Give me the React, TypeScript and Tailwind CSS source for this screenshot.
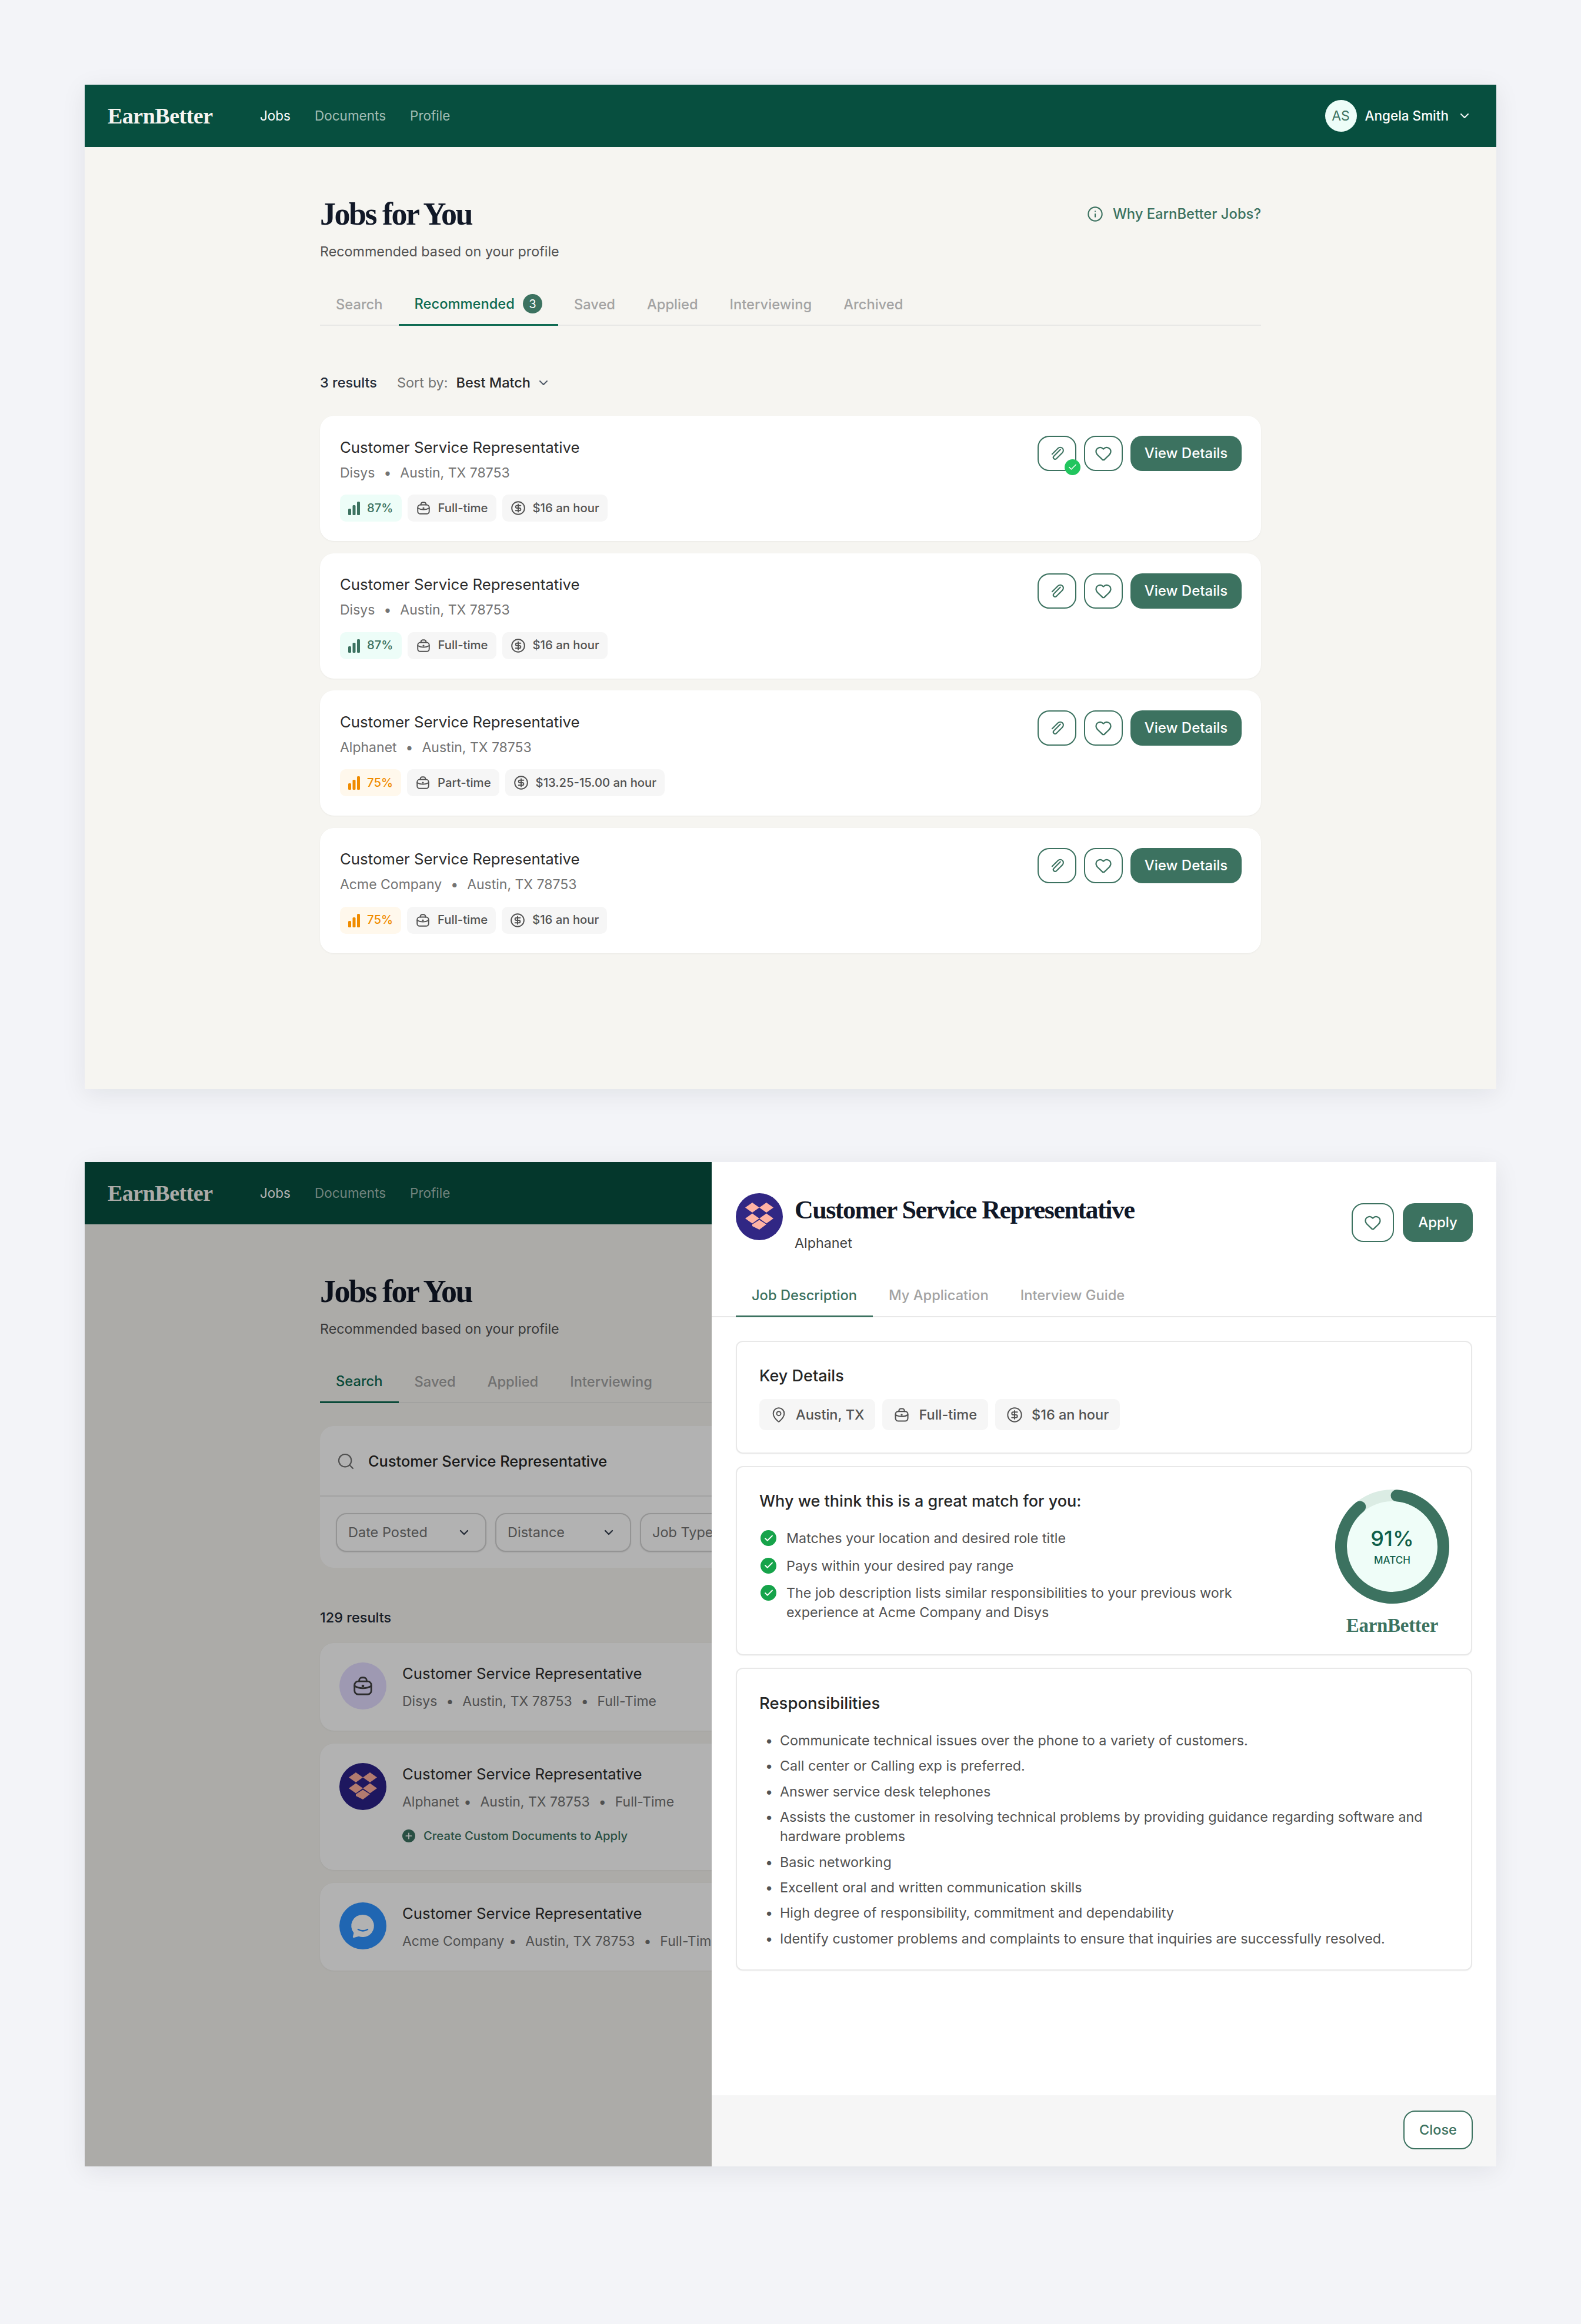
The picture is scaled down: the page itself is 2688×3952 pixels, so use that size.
import React from 'react'
import { Heart, Info, ChevronDown, Search, CircleDollarSign, MapPin, Check, Plus } from 'lucide-react'

const SERIF = "font-['Liberation_Serif',serif]"

const ClipIcon = () => (
  <svg width="28" height="28" viewBox="0 0 24 24" fill="none" stroke="currentColor" strokeWidth="1.8" strokeLinecap="round" strokeLinejoin="round">
    <path d="M17 6.500 7.500 16a2.600 2.600 0 0 0 3.700 3.700L20 11a4.500 4.500 0 0 0-6.400-6.400L5 13" />
  </svg>
)

const BagIcon = ({ size = 24 }: { size?: number }) => (
  <svg width={size} height={size} viewBox="0 0 24 24" fill="none" stroke="currentColor" strokeWidth="1.8" strokeLinecap="round" strokeLinejoin="round">
    <rect x="3" y="7" width="18" height="14" rx="4" />
    <path d="M8 7V6a3 3 0 0 1 3-3h2a3 3 0 0 1 3 3v1" />
    <path d="M3 12c2.5 1.6 5.5 2.4 9 2.4s6.5-.8 9-2.4" />
    <circle cx="12" cy="12" r=".6" fill="currentColor" />
  </svg>
)

const BarsIcon = ({ color }: { color: string }) => (
  <svg width="20" height="24" viewBox="0 0 20 24" fill={color}>
    <rect x="0" y="13" width="5" height="11" rx="1.5" />
    <rect x="7.5" y="7" width="5" height="17" rx="1.5" />
    <rect x="15" y="1" width="5" height="23" rx="1.5" />
  </svg>
)

const BoxLogo = ({ bg, fg, size = 80 }: { bg: string; fg: string; size?: number }) => (
  <svg width={size} height={size} viewBox="0 0 80 80" className="shrink-0">
    <circle cx="40" cy="40" r="40" fill={bg} />
    <g fill={fg}>
      <polygon points="16,24.5 28,16 40,24.5 28,33" />
      <polygon points="40,24.5 52,16 64,24.5 52,33" />
      <polygon points="16,43 28,34.5 40,43 28,51.5" />
      <polygon points="40,43 52,34.5 64,43 52,51.5" />
      <polygon points="28,53 40,45.5 52,53 40,62 28,56" />
    </g>
  </svg>
)

const ChatLogo = () => (
  <svg width="80" height="80" viewBox="0 0 80 80" className="shrink-0">
    <circle cx="40" cy="40" r="40" fill="#2f93ff" />
    <path d="M40 21a19 19 0 1 1-7 36.700L25 60c-1.500.400-2.500-.600-2-2l1.500-6A19 19 0 0 1 40 21z" fill="#fff" />
    <path d="M32 46c5 3 11 3 16 0" fill="none" stroke="#2f93ff" strokeWidth="2.600" strokeLinecap="round" />
  </svg>
)

const Chip = ({ icon, label, tone = 'plain' }: { icon: React.ReactNode; label: string; tone?: 'plain' | 'green' | 'orange' }) => {
  const toneClass =
    tone === 'green' ? 'bg-[#edfdf8] text-[#3c7260]' : tone === 'orange' ? 'bg-[#fff8ec] text-[#f08c00]' : 'bg-[#f6f6f6] text-[#525252]'
  return (
    <span className={`flex h-[46px] items-center gap-[12px] rounded-[10px] px-[14px] text-[20.3px] font-medium ${toneClass}`}>
      {icon}
      {label}
    </span>
  )
}

const DetailChip = ({ icon, label }: { icon: React.ReactNode; label: string }) => (
  <span className="flex h-[53px] items-center gap-[15px] rounded-[10px] bg-[#f6f6f6] px-[19px] text-[23.5px] font-medium text-[#525252]">
    {icon}
    {label}
  </span>
)

const IconButton = ({ children, className = '' }: { children: React.ReactNode; className?: string }) => (
  <button className={`relative flex h-[60px] w-[66px] items-center justify-center rounded-[20px] border-2 border-[#3c7260] bg-white text-[#3c7260] ${className}`}>
    {children}
  </button>
)

const JOBS = [
  { company: 'Disys', match: '87%', tone: 'green', type: 'Full-time', pay: '$16 an hour', done: true },
  { company: 'Disys', match: '87%', tone: 'green', type: 'Full-time', pay: '$16 an hour', done: false },
  { company: 'Alphanet', match: '75%', tone: 'orange', type: 'Part-time', pay: '$13.25-15.00 an hour', done: false },
  { company: 'Acme Company', match: '75%', tone: 'orange', type: 'Full-time', pay: '$16 an hour', done: false },
] as const

const Sep = ({ tight = false }: { tight?: boolean }) => (
  <span className={`text-[#737373] ${tight ? 'ml-[8px] mr-[15px]' : 'mx-[15px]'}`}>•</span>
)

const JobCard = ({ job }: { job: (typeof JOBS)[number] }) => (
  <div className="flex h-[213px] justify-between rounded-[24px] bg-white pb-0 pl-[34px] pr-[33px] shadow-[0_1px_3px_rgba(0,0,0,0.05)]">
    <div className="pt-[35px]">
      <div className="flex h-[38px] items-center text-[25.8px] text-[#2b2b2b]">Customer Service Representative</div>
      <div className="mt-[6px] flex h-[36px] items-center text-[23px] text-[#737373]">
        {job.company}
        <Sep />
        Austin, TX 78753
      </div>
      <div className="mt-[19px] flex gap-[10px]">
        <Chip
          tone={job.tone}
          icon={<BarsIcon color={job.tone === 'green' ? '#3c7260' : '#f08c00'} />}
          label={job.match}
        />
        <Chip icon={<BagIcon size={26} />} label={job.type} />
        <Chip icon={<CircleDollarSign size={26} strokeWidth={1.8} />} label={job.pay} />
      </div>
    </div>
    <div className="flex items-start gap-[13px] pt-[34px]">
      <IconButton>
        <ClipIcon />
        {job.done && (
          <span className="absolute -bottom-[9px] -right-[9px] flex h-[27px] w-[27px] items-center justify-center rounded-full bg-[#22c55e] text-white">
            <Check size={17} strokeWidth={2} />
          </span>
        )}
      </IconButton>
      <IconButton>
        <Heart size={30} strokeWidth={1.8} />
      </IconButton>
      <button className="h-[60px] w-[189px] rounded-[20px] bg-[#3c7260] text-[24px] font-medium text-white">View Details</button>
    </div>
  </div>
)

const Nav = () => (
  <div className="flex h-[106px] items-center justify-between bg-[#074f3f] pl-[39px] pr-[42px]">
    <div className="flex items-center">
      <span className={`${SERIF} w-[178px] text-[38px] font-bold tracking-[-0.5px] text-[#f6f5f1]`}>EarnBetter</span>
      <div className="ml-[81px] flex gap-[41px] text-[22.5px]">
        <span className="text-white">Jobs</span>
        <span className="text-[#a3bdb5]">Documents</span>
        <span className="text-[#a3bdb5]">Profile</span>
      </div>
    </div>
    <div className="flex items-center">
      <span className="flex h-[54px] w-[54px] items-center justify-center rounded-full bg-[#edfdf8] text-[23px] text-[#3c7260]">AS</span>
      <span className="ml-[14px] text-[22.5px] font-medium text-white">Angela Smith</span>
      <ChevronDown size={24} strokeWidth={2} className="ml-[15px] text-white" />
    </div>
  </div>
)

const Tabs = ({ items, active }: { items: string[]; active: string }) => (
  <div className="mt-[36px] flex h-[72px] border-b-2 border-[#e8e8e6]">
    {items.map((t) => (
      <div
        key={t}
        className={`-mb-[2px] flex items-center gap-[14px] px-[27px] text-[23.7px] font-medium ${t === active ? 'border-b-[3px] border-[#0f6b52] text-[#0f6b52]' : 'text-[#a3a3a3]'}`}
      >
        {t}
        {t === 'Recommended' && (
          <span className="flex h-[33px] w-[33px] items-center justify-center rounded-full bg-[#3c7260] text-[20px] font-normal text-white">3</span>
        )}
      </div>
    ))}
  </div>
)

const Heading = () => (
  <>
    <div className={`${SERIF} flex h-[64px] items-center text-[54px] font-bold tracking-[-2.5px] text-[#111827]`}>Jobs for You</div>
    <div className="mt-[14px] flex h-[36px] items-center text-[23.3px] text-[#525252]">Recommended based on your profile</div>
  </>
)

const FirstFrame = () => (
  <div className="h-[1708px] w-[2400px] overflow-hidden bg-[#f6f5f1] shadow-[0_8px_40px_rgba(17,24,39,0.08)]">
    <Nav />
    <div className="ml-[400px] w-[1600px] pt-[82px]">
      <div className="relative">
        <Heading />
        <div className="absolute right-0 top-[14px] flex items-center gap-[16px] text-[23.8px] font-medium text-[#3c7260]">
          <Info size={28} strokeWidth={1.8} />
          Why EarnBetter Jobs?
        </div>
      </div>
      <Tabs items={['Search', 'Recommended', 'Saved', 'Applied', 'Interviewing', 'Archived']} active="Recommended" />
      <div className="mt-[79px] flex h-[36px] items-center text-[23.5px]">
        <span className="font-medium text-[#1f2937]">3 results</span>
        <span className="ml-[34px] text-[#737373]">Sort by:</span>
        <span className="ml-[14px] font-medium text-[#262626]">Best Match</span>
        <ChevronDown size={24} strokeWidth={2} className="ml-[10px] text-[#4b5563]" />
      </div>
      <div className="mt-[38px] flex flex-col gap-[20.5px]">
        {JOBS.map((job, i) => (
          <JobCard key={i} job={job} />
        ))}
      </div>
    </div>
  </div>
)

const Filter = ({ label, width }: { label: string; width: string }) => (
  <div className={`flex h-[66px] shrink-0 items-center justify-between rounded-[18px] border-2 border-[#d4d4d4] bg-white pl-[19px] pr-[24px] text-[23.5px] text-[#737373] shadow-[0_1px_2px_rgba(0,0,0,0.1)] ${width}`}>
    {label}
    <ChevronDown size={24} strokeWidth={2.4} className="text-[#374151]" />
  </div>
)

const ResultCard = ({ logo, company, cta, tight, height }: { logo: React.ReactNode; company: string; cta?: boolean; tight?: boolean; height: string }) => (
  <div className={`flex gap-[27px] rounded-[24px] bg-white pl-[33px] pt-[33px] shadow-[0_1px_3px_rgba(0,0,0,0.05)] ${height}`}>
    {logo}
    <div className="whitespace-nowrap">
      <div className="flex h-[38px] items-center text-[25.8px] text-[#2b2b2b]">Customer Service Representative</div>
      <div className="mt-[10px] flex h-[36px] items-center text-[23px] text-[#737373]">
        {company}
        <Sep tight={tight} />
        Austin, TX 78753
        <Sep />
        Full-Time
      </div>
      {cta && (
        <div className="mt-[24px] flex h-[32px] items-center gap-[14px] text-[20.3px] font-medium text-[#3c7260]">
          <span className="flex h-[22px] w-[22px] items-center justify-center rounded-full bg-[#3c7260] text-white">
            <Plus size={16} strokeWidth={2.6} />
          </span>
          Create Custom Documents to Apply
        </div>
      )}
    </div>
  </div>
)

const SecondPage = () => (
  <>
    <Nav />
    <div className="ml-[400px] w-[1600px] pt-[82px]">
      <Heading />
      <Tabs items={['Search', 'Saved', 'Applied', 'Interviewing']} active="Search" />
      <div className="mt-[39px] rounded-[24px] bg-white">
        <div className="flex h-[120px] items-center gap-[22px] border-b-2 border-[#e8e8e8] pl-[28px] pt-[2px] text-[25.4px] font-medium text-[#262626]">
          <Search size={32} strokeWidth={1.6} className="text-[#737373]" />
          Customer Service Representative
        </div>
        <div className="flex h-[121px] gap-[15px] pl-[27px] pt-[28px]">
          <Filter label="Date Posted" width="w-[256px]" />
          <Filter label="Distance" width="w-[231px]" />
          <Filter label="Job Type" width="w-[231px]" />
        </div>
      </div>
      <div className="mt-[67px] flex h-[36px] items-center text-[23.5px] font-medium text-[#1f2937]">129 results</div>
      <div className="mt-[25px] flex flex-col gap-[22px]">
        <ResultCard
          height="h-[149px]"
          company="Disys"
          logo={
            <span className="flex h-[80px] w-[80px] shrink-0 items-center justify-center rounded-full bg-[#e3dcff] text-[#404040]">
              <BagIcon size={38} />
            </span>
          }
        />
        <ResultCard height="h-[215px]" company="Alphanet" cta tight logo={<BoxLogo bg="#2b2289" fg="#ffb0a0" />} />
        <ResultCard height="h-[149px]" company="Acme Company" tight logo={<ChatLogo />} />
      </div>
    </div>
  </>
)

const PanelBox = ({ children, className = '' }: { children: React.ReactNode; className?: string }) => (
  <div className={`rounded-[12px] border-2 border-[#e8e8e8] bg-white shadow-[0_1px_2px_rgba(0,0,0,0.04)] ${className}`}>{children}</div>
)

const MATCH_ITEMS: React.ReactNode[] = [
  'Matches your location and desired role title',
  'Pays within your desired pay range',
  <>
    The job description lists similar responsibilities to your previous work
    <br />
    experience at Acme Company and Disys
  </>,
]

const RESPONSIBILITIES: React.ReactNode[] = [
  'Communicate technical issues over the phone to a variety of customers.',
  'Call center or Calling exp is preferred.',
  'Answer service desk telephones',
  <>
    Assists the customer in resolving technical problems by providing guidance regarding software and
    <br />
    hardware problems
  </>,
  'Basic networking',
  'Excellent oral and written communication skills',
  'High degree of responsibility, commitment and dependability',
  'Identify customer problems and complaints to ensure that inquiries are successfully resolved.',
]

const MatchRing = () => (
  <div className="relative h-[194px] w-[194px]">
    <svg width="194" height="194" viewBox="0 0 194 194">
      <circle cx="97" cy="97" r="87" fill="#effdf8" stroke="#dbece4" strokeWidth="20" />
      <circle
        cx="97"
        cy="97"
        r="87"
        fill="none"
        stroke="#3c7260"
        strokeWidth="20"
        strokeLinecap="round"
        pathLength={360}
        strokeDasharray="316 360"
        transform="rotate(-85 97 97)"
      />
    </svg>
    <div className="absolute inset-0 flex flex-col items-center justify-center pb-[2px] text-[#0f5f4a]">
      <span className="text-[36px] font-medium leading-[44px]">91%</span>
      <span className="mt-[4px] text-[17px] font-medium leading-[22px]">MATCH</span>
    </div>
  </div>
)

const Panel = () => (
  <div className="absolute inset-y-0 right-0 flex w-[1334px] flex-col bg-white">
    <div className="flex h-[192px] justify-between pl-[41px] pr-[40px] pt-[53px]">
      <div className="flex gap-[20px]">
        <BoxLogo bg="#312784" fg="#ffb3a4" />
        <div>
          <div className={`${SERIF} flex h-[58px] items-center text-[44px] font-bold tracking-[-1.5px] text-[#111827]`}>Customer Service Representative</div>
          <div className="mt-[10px] flex h-[34px] items-center text-[23.3px] text-[#404040]">Alphanet</div>
        </div>
      </div>
      <div className="flex items-start gap-[15px] pt-[17px]">
        <button className="flex h-[66px] w-[72px] items-center justify-center rounded-[20px] border-2 border-[#3c7260] text-[#3c7260]">
          <Heart size={30} strokeWidth={1.8} />
        </button>
        <button className="h-[66px] w-[119px] rounded-[20px] bg-[#3c7260] text-[24px] font-medium text-white">Apply</button>
      </div>
    </div>
    <div className="flex h-[72px] border-b-2 border-[#e8e8e8] pl-[41px]">
      <div className="-mb-[2px] flex items-center border-b-[3px] border-[#3c7260] px-[27px] text-[23.7px] font-medium text-[#3c7260]">Job Description</div>
      <div className="flex items-center px-[27px] text-[23.7px] font-medium text-[#a3a3a3]">My Application</div>
      <div className="flex items-center px-[27px] text-[23.7px] font-medium text-[#a3a3a3]">Interview Guide</div>
    </div>
    <div className="flex flex-1 flex-col gap-[21px] px-[41px] pt-[40px]">
      <PanelBox className="h-[192px] px-[38px] pt-[40px]">
        <div className="flex h-[36px] items-center text-[27px] font-medium text-[#262626]">Key Details</div>
        <div className="mt-[21px] flex gap-[12px]">
          <DetailChip icon={<MapPin size={28} strokeWidth={1.7} />} label="Austin, TX" />
          <DetailChip icon={<BagIcon size={28} />} label="Full-time" />
          <DetailChip icon={<CircleDollarSign size={28} strokeWidth={1.7} />} label="$16 an hour" />
        </div>
      </PanelBox>
      <PanelBox className="flex h-[322px] justify-between pl-[38px] pr-[37px]">
        <div className="pt-[40px]">
          <div className="flex h-[36px] items-center text-[27px] font-medium text-[#262626]">Why we think this is a great match for you:</div>
          <div className="mt-[28px] flex flex-col gap-[13.5px]">
            {MATCH_ITEMS.map((item, i) => (
              <div key={i} className="flex gap-[17px] pl-[2px] text-[23.3px] leading-[33px] text-[#525252]">
                <span className="mt-[3px] flex h-[27px] w-[27px] shrink-0 items-center justify-center rounded-full bg-[#16a34a] text-white">
                  <Check size={18} strokeWidth={2.4} />
                </span>
                <span>{item}</span>
              </div>
            ))}
          </div>
        </div>
        <div className="flex flex-col items-center pt-[38px]">
          <MatchRing />
          <span className={`${SERIF} mt-[16px] text-[33px] font-bold leading-[42px] tracking-[-0.3px] text-[#3c7260]`}>EarnBetter</span>
        </div>
      </PanelBox>
      <PanelBox className="h-[515px] pl-[38px] pr-[39px] pt-[41px]">
        <div className="flex h-[36px] items-center text-[27.5px] font-medium text-[#262626]">Responsibilities</div>
        <ul className="mt-[28px] flex flex-col gap-[10.4px]">
          {RESPONSIBILITIES.map((r, i) => (
            <li key={i} className="flex text-[23.3px] leading-[33px] text-[#525252]">
              <span className="w-[35px] shrink-0 pl-[10px]">•</span>
              <span>{r}</span>
            </li>
          ))}
        </ul>
      </PanelBox>
    </div>
    <div className="flex h-[121px] items-start justify-end bg-[#f6f6f6] pr-[40px] pt-[26px]">
      <button className="h-[66px] w-[118px] rounded-[20px] border-2 border-[#3c7260] bg-white text-[23.5px] font-medium text-[#3c7260]">Close</button>
    </div>
  </div>
)

const SecondFrame = () => (
  <div className="relative h-[1708px] w-[2400px] overflow-hidden bg-[#f6f5f1] shadow-[0_8px_40px_rgba(17,24,39,0.08)]">
    <SecondPage />
    <div className="absolute inset-0 bg-black/30" />
    <Panel />
  </div>
)

export default function App() {
  return (
    <div className="flex h-[3952px] w-[2688px] flex-col gap-[124px] bg-[#f3f4f8] px-[144px] pt-[144px] font-['Inter',sans-serif]">
      <FirstFrame />
      <SecondFrame />
    </div>
  )
}
